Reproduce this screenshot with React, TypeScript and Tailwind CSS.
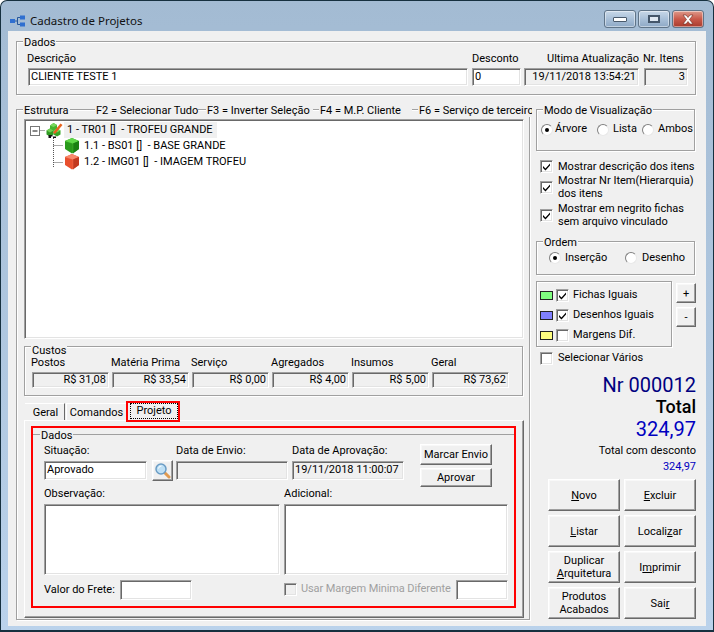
import type { ReactNode } from 'react';

const sunken =
  'border border-t-[#a0a0a0] border-l-[#a0a0a0] border-r-white border-b-white shadow-[inset_1px_1px_0_#696969,inset_-1px_-1px_0_#e3e3e3]';
const raised =
  'border border-t-white border-l-white border-r-[#696969] border-b-[#696969] shadow-[inset_-1px_-1px_0_#a0a0a0,inset_1px_1px_0_#f8f8f8] bg-[#f0f0f0]';
const etched = 'border border-[#a0a0a0] shadow-[inset_1px_1px_0_white,1px_1px_0_white]';

function Group({ title, className, titleTop = 'top-[-6px]', children }: { title?: string; className: string; titleTop?: string; children?: ReactNode }) {
  return (
    <div className={`relative ${etched} ${className}`}>
      {title && <span className={`absolute left-[6px] ${titleTop} bg-[#f0f0f0] px-px leading-[13px]`}>{title}</span>}
      {children}
    </div>
  );
}

function Field({ className, text, right }: { className: string; text?: string; right?: boolean }) {
  return (
    <div className={`${sunken} flex items-center px-[2px] whitespace-nowrap ${right ? 'justify-end' : ''} ${className}`}>
      {text}
    </div>
  );
}

function Check({ checked, disabled }: { checked?: boolean; disabled?: boolean }) {
  return (
    <span className={`${sunken} ${disabled ? 'bg-[#f0f0f0]' : 'bg-white'} inline-flex h-[13px] w-[13px] shrink-0 items-center justify-center`}>
      {checked && (
        <svg width="9" height="9" viewBox="0 0 9 9">
          <path d="M1 4l2.500 2.500L8 1.500v2L3.500 8.500 1 6z" fill="#000" />
        </svg>
      )}
    </span>
  );
}

function Radio({ checked }: { checked?: boolean }) {
  return (
    <span className="inline-flex h-[12px] w-[12px] shrink-0 items-center justify-center rounded-full border border-t-[#808080] border-l-[#808080] border-r-[#e8e8e8] border-b-[#e8e8e8] bg-white">
      {checked && <span className="h-[4px] w-[4px] rounded-full bg-black" />}
    </span>
  );
}

function Cube({ top, side, dark }: { top: string; side: string; dark: string }) {
  return (
    <svg width="16" height="17" viewBox="0 0 16 17" className="-mt-px shrink-0">
      <path d="M1 4l7-3 7 3v8l-7 4.500L1 12z" fill={side} />
      <path d="M1 4l7-3 7 3-6 2.500z" fill={top} />
      <path d="M9 6.500L15 4v8l-6 4.500z" fill={dark} />
      <path d="M1 4l8 2.500v10" stroke={top} strokeWidth="0.5" fill="none" opacity="0.6" />
    </svg>
  );
}

function RootIcon() {
  return (
    <svg width="17" height="17" viewBox="0 0 17 17" className="shrink-0">
      <path d="M4 3.500L7.500 1 11 3v4L7.500 9 4 7z" fill="#45b52f" />
      <path d="M4 3.500L7.500 1 11 3 7.500 5z" fill="#7ad85e" />
      <path d="M0.500 8.500L4 6.500 7.500 8.500v4L4 14.500 0.500 12.500z" fill="#2f9a22" />
      <path d="M0.500 8.500L4 6.500 7.500 8.500 4 10.500z" fill="#6ccf50" />
      <path d="M7.500 8.500L11 6.500 14.500 8.500v4L11 14.500 7.500 12.500z" fill="#36a526" />
      <path d="M7.500 8.500L11 6.500 14.500 8.500 11 10.500z" fill="#7ad85e" />
      <path d="M7 10.500L14.500 1.500 16.500 3 9 12z" fill="#e8641f" />
      <path d="M2.500 13h4v1.500H5V16H2.500zM7 14.500h3V16H7z" fill="#111" />
    </svg>
  );
}

function TreeRow({ indent, icon, text, selected }: { indent: string; icon: ReactNode; text: string; selected?: boolean }) {
  return (
    <div className={`flex h-[16px] items-center ${indent}`}>
      {icon}
      <span className={`ml-[1px] flex h-[16px] items-center whitespace-pre px-[3px] ${selected ? 'bg-[#f0f0f0] pr-[4px]' : ''}`}>{text}</span>
    </div>
  );
}

function Btn({ className, children }: { className: string; children: ReactNode }) {
  return <button className={`${raised} flex flex-col items-center justify-center whitespace-nowrap leading-[13px] ${className}`}>{children}</button>;
}

function Custo({ label, value }: { label: string; value: string }) {
  return (
    <div className="w-[80px]">
      <div className="h-[16px] leading-[13px]">{label}</div>
      <Field className="ml-px h-[16px] w-[77px]" text={value} right />
    </div>
  );
}

function WinButton({ className, children }: { className: string; children: ReactNode }) {
  return (
    <div className={`flex h-[18px] w-[32px] items-center justify-center rounded-[3px] border border-[#5f7488] shadow-[inset_0_0_0_1px_rgba(255,255,255,0.45)] ${className}`}>
      {children}
    </div>
  );
}

export default function App() {
  return (
    <div className="flex h-[632px] w-[714px] flex-col overflow-hidden rounded-t-[7px] border border-b-2 border-[#16303f] bg-gradient-to-b from-[#a3bbd3] to-[#bad2eb] font-['Roboto',sans-serif] text-[11px] text-black">
      {/* title bar */}
      <div className="flex h-[30px] shrink-0 items-center pl-[9px] pr-[9px]">
        <svg width="15" height="12" viewBox="0 0 15 12" className="mt-[9px] shrink-0">
          <path d="M5 6h2.500M7.500 2.500h2.500M7.500 2.500v7h2.500" stroke="#27579a" fill="none" />
          <rect x="0" y="4" width="5" height="4" fill="#2f6fd0" />
          <rect x="10" y="0.500" width="5" height="4" fill="#2f6fd0" />
          <rect x="10" y="7.500" width="5" height="4" fill="#2f6fd0" />
        </svg>
        <span className="ml-[5px] mt-[9px] font-['Noto_Sans',sans-serif] text-[11.5px] text-[#111]">Cadastro de Projetos</span>
        <div className="ml-auto flex gap-[2px] self-start pt-[9px]">
          <WinButton className="bg-gradient-to-b from-[#c8d8e8] via-[#a9c0d8] to-[#8ea9c6]">
            <span className="h-[5px] w-[14px] rounded-[1px] border border-[#4a5a6c] bg-white" />
          </WinButton>
          <WinButton className="bg-gradient-to-b from-[#c8d8e8] via-[#a9c0d8] to-[#8ea9c6]">
            <span className="h-[8px] w-[12px] border-2 border-[#44566a] bg-[#dfe8f2]" />
          </WinButton>
          <WinButton className="bg-gradient-to-b from-[#dd9a8c] via-[#c9594a] to-[#a83a2c]">
            <svg width="16" height="11" viewBox="0 0 16 11">
              <path d="M3 1h3l2 2.500L10 1h3l-3.500 4.500L13 10h-3L8 7.500 6 10H3l3.500-4.500z" fill="#fff" stroke="#6b2a20" strokeWidth="0.6" />
            </svg>
          </WinButton>
        </div>
      </div>

      {/* client area */}
      <div className="mx-[7px] h-[595px] shrink-0 bg-[#f0f0f0] pl-[8px] pt-[10px]">
        <Group title="Dados" className="flex h-[54px] w-[680px] pl-[11px] pt-[10px]">
          <div className="w-[440px]">
            <div className="-ml-px h-[16px] leading-[13px]">Descrição</div>
            <Field className="h-[18px] bg-white" text="CLIENTE TESTE 1" />
          </div>
          <div className="ml-[4px] w-[49px]">
            <div className="h-[16px] leading-[13px]">Desconto</div>
            <Field className="h-[18px] bg-white" text="0" />
          </div>
          <div className="ml-[3px] w-[115px]">
            <div className="h-[16px] whitespace-nowrap text-right leading-[13px]">Ultima Atualização</div>
            <Field className="h-[18px]" text="19/11/2018 13:54:21" right />
          </div>
          <div className="ml-[5px] w-[44px]">
            <div className="-ml-px h-[16px] whitespace-nowrap leading-[13px]">Nr. Itens</div>
            <Field className="h-[18px]" text="3" right />
          </div>
        </Group>

        <div className="mt-[14px] flex items-start">
          {/* left column */}
          <div className={`relative h-[511px] w-[514px] ${etched}`}>
            <div className="absolute left-[6px] right-[-3px] top-[-6px] flex overflow-hidden whitespace-nowrap leading-[13px]">
              <span className="w-[47px] shrink-0 bg-[#f0f0f0] px-px">Estrutura</span>
              <span className="ml-[25px] w-[103px] shrink-0 bg-[#f0f0f0] px-px">F2 = Selecionar Tudo</span>
              <span className="ml-[8px] w-[107px] shrink-0 bg-[#f0f0f0] px-px">F3 = Inverter Seleção</span>
              <span className="ml-[6px] w-[93px] shrink-0 bg-[#f0f0f0] px-px">F4 = M.P. Cliente</span>
              <span className="ml-[6px] shrink-0 bg-[#f0f0f0] px-px">F6 = Serviço de terceiro</span>
            </div>

            <div className={`${sunken} relative ml-[7px] mt-[9px] h-[220px] w-[500px] bg-white pl-[5px] pt-[2px]`}>
              <svg width="50" height="45" viewBox="0 0 50 45" className="absolute left-[4px] top-[3px]">
                <path d="M10.500 7.500h6M24.500 15v30M24.500 22.500h10M24.500 39.500h10" stroke="#555" strokeDasharray="1 1" fill="none" />
                <rect x="1.500" y="3.500" width="9" height="9" fill="#fff" stroke="#777" />
                <path d="M3.500 8h5" stroke="#111" />
              </svg>
              <TreeRow indent="pl-[16px]" icon={<RootIcon />} text="1 - TR01 []  - TROFEU GRANDE" selected />
              <TreeRow indent="pl-[34px]" icon={<Cube top="#5fd848" side="#2a9a1c" dark="#1a8012" />} text="1.1 - BS01 []  - BASE GRANDE" />
              <TreeRow indent="pl-[34px]" icon={<Cube top="#f98a6c" side="#e8502e" dark="#c2381e" />} text="1.2 - IMG01 []  - IMAGEM TROFEU" />
            </div>

            <Group title="Custos" titleTop="top-[-3px]" className="ml-[7px] mt-[7px] flex h-[50px] w-[499px] pl-[6px] pt-[9px]">
              <Custo label="Postos" value="R$ 31,08" />
              <Custo label="Matéria Prima" value="R$ 33,54" />
              <Custo label="Serviço" value="R$ 0,00" />
              <Custo label="Agregados" value="R$ 4,00" />
              <Custo label="Insumos" value="R$ 5,00" />
              <Custo label="Geral" value="R$ 73,62" />
            </Group>

            {/* tabs */}
            <div className="relative ml-[8px] mt-[5px] flex h-[19px] w-[155px] items-end">
              <div className="flex h-[17px] w-[40px] items-center justify-center border-r border-r-[#696969] border-t border-t-white pl-[2px] pt-[2px]">Geral</div>
              <div className="ml-px flex h-[17px] w-[61px] items-center justify-center border-r border-r-[#696969] border-l border-l-white border-t border-t-white pt-[2px]">Comandos</div>
              <div className="mb-px ml-[3px] flex h-[16px] w-[48px] items-center justify-center border border-dotted border-black pt-px">Projeto</div>
              <div className="absolute bottom-[-2px] left-[101px] top-0 w-[54px] border-2 border-[#ff0000]" />
            </div>

            <div className="ml-[7px] h-[198px] w-[500px] border border-t-white border-l-white border-r-[#696969] border-b-[#696969] pl-[6px] pt-[5px] shadow-[inset_-1px_-1px_0_#a0a0a0]">
              <div className="h-[182px] w-[485px] border-2 border-[#ff0000]">
                <div className="relative mt-[6px] border-t border-t-[#a0a0a0]">
                  <span className="absolute left-[7px] top-[-6px] bg-[#f0f0f0] px-px leading-[13px]">Dados</span>
                </div>
                <div className="flex h-[52px] pl-[11px] pt-[9px]">
                  <div className="w-[103px]">
                    <div className="h-[17px] leading-[13px]">Situação:</div>
                    <Field className="h-[19px] bg-white" text="Aprovado" />
                  </div>
                  <Btn className="ml-[5px] mt-[16px] h-[21px] w-[21px]">
                    <svg width="17" height="17" viewBox="0 0 17 17">
                      <path d="M10 10l5 5" stroke="#e09a50" strokeWidth="3" strokeLinecap="round" />
                      <circle cx="7" cy="7" r="5" fill="#bfe0f5" stroke="#6a9cc4" strokeWidth="1.500" />
                      <path d="M4.500 6.500a3 3 0 0 1 3-2.500" stroke="#fff" fill="none" />
                    </svg>
                  </Btn>
                  <div className="ml-[3px] w-[113px]">
                    <div className="h-[17px] leading-[13px]">Data de Envio:</div>
                    <Field className="h-[19px] w-[112px]" />
                  </div>
                  <div className="ml-[3px] w-[113px]">
                    <div className="h-[17px] whitespace-nowrap leading-[13px]">Data de Aprovação:</div>
                    <Field className="h-[19px] w-[112px]" text="19/11/2018 11:00:07" />
                  </div>
                  <div className="ml-[15px] flex flex-col gap-[3px]">
                    <Btn className="h-[26px] w-[72px]">Marcar Envio</Btn>
                    <Btn className="h-[23px] w-[72px]">Aprovar</Btn>
                  </div>
                </div>
                <div className="flex pl-[11px]">
                  <div className="w-[240px]">
                    <div className="h-[17px] leading-[13px]">Observação:</div>
                    <Field className="h-[71px] w-[236px] bg-white" />
                  </div>
                  <div>
                    <div className="h-[17px] leading-[13px]">Adicional:</div>
                    <Field className="h-[71px] w-[224px] bg-white" />
                  </div>
                </div>
                <div className="mt-[5px] flex items-center pl-[11px]">
                  <span className="w-[76px] whitespace-nowrap">Valor do Frete:</span>
                  <Field className="h-[20px] w-[72px] bg-white" />
                  <span className="ml-[92px] flex items-center gap-[4px] pb-[2px] text-[#a0a0a0]">
                    <Check disabled />
                    <span className="whitespace-nowrap tracking-[-0.1px]">Usar Margem Minima Diferente</span>
                  </span>
                  <Field className="ml-auto mr-[6px] h-[20px] w-[52px] bg-white" />
                </div>
              </div>
            </div>
          </div>

          {/* right column */}
          <div className="ml-[6px] w-[160px]">
            <Group title="Modo de Visualização" className="flex h-[42px] w-[159px] items-center pb-[1px] pl-[4px]">
              <Radio checked />
              <span className="ml-[2px] w-[42px]">Árvore</span>
              <Radio />
              <span className="ml-[4px] w-[29px]">Lista</span>
              <Radio />
              <span className="ml-[4px]">Ambos</span>
            </Group>

            <div className="mt-[8px] pl-[4px] leading-[13px]">
              <div className="flex h-[14px] items-center gap-[5px] whitespace-nowrap"><Check checked />Mostrar descrição dos itens</div>
              <div className="mt-px flex h-[26px] items-center gap-[5px] whitespace-nowrap"><Check checked /><span>Mostrar Nr Item(Hierarquia)<br />dos itens</span></div>
              <div className="mt-[2px] flex h-[26px] items-center gap-[5px] whitespace-nowrap"><Check checked /><span>Mostrar em negrito fichas<br />sem arquivo vinculado</span></div>
            </div>

            <Group title="Ordem" className="mt-[13px] flex h-[34px] w-[159px] items-center pl-[12px]">
              <Radio checked />
              <span className="ml-[4px] w-[60px]">Inserção</span>
              <Radio />
              <span className="ml-[5px]">Desenho</span>
            </Group>

            <div className="mt-[6px] flex items-start">
              <div className={`${etched} flex h-[66px] w-[136px] flex-col gap-[7px] pl-[3px] pt-[7px]`}>
                <div className="flex h-[13px] items-center"><span className="mr-[3px] h-[9px] w-[13px] border border-[#222] bg-[#80ff80]" /><Check checked /><span className="ml-[4px]">Fichas Iguais</span></div>
                <div className="flex h-[13px] items-center"><span className="mr-[3px] h-[9px] w-[13px] border border-[#222] bg-[#8080ff]" /><Check checked /><span className="ml-[4px]">Desenhos Iguais</span></div>
                <div className="flex h-[13px] items-center"><span className="mr-[3px] h-[9px] w-[13px] border border-[#222] bg-[#ffff80]" /><Check /><span className="ml-[4px]">Margens Dif.</span></div>
              </div>
              <div className="ml-[4px] mt-[2px] flex flex-col gap-[4px]">
                <Btn className="h-[20px] w-[20px]">+</Btn>
                <Btn className="h-[20px] w-[20px]">-</Btn>
              </div>
            </div>

            <div className="mt-[4px] flex h-[14px] items-center gap-[5px] pl-[4px]"><Check />Selecionar Vários</div>

            <div className="mt-[8px] text-right">
              <div className="h-[24px] text-[20px] leading-[24px] text-[#000080]">Nr 000012</div>
              <div className="h-[20px] text-[18px] font-medium leading-[20px]">Total</div>
              <div className="h-[24px] text-[20px] leading-[24px] text-[#0000c0]">324,97</div>
              <div className="mt-[2px] h-[15px] leading-[15px]">Total com desconto</div>
              <div className="mt-px h-[15px] leading-[15px] text-[#0000c0]">324,97</div>
            </div>

            <div className="ml-[12px] mt-[5px] grid w-[148px] grid-cols-[72px_72px] gap-x-[4px] gap-y-[4px]">
              <Btn className="h-[32px]"><span><u>N</u>ovo</span></Btn>
              <Btn className="h-[32px]"><span><u>E</u>xcluir</span></Btn>
              <Btn className="h-[32px]"><span><u>L</u>istar</span></Btn>
              <Btn className="h-[32px]"><span>Locali<u>z</u>ar</span></Btn>
              <Btn className="h-[32px]"><span>Duplicar</span><span><u>A</u>rquitetura</span></Btn>
              <Btn className="h-[32px]"><span>I<u>m</u>primir</span></Btn>
              <Btn className="h-[32px]"><span>Produtos</span><span>Acabados</span></Btn>
              <Btn className="h-[32px]"><span>Sai<u>r</u></span></Btn>
            </div>
          </div>
        </div>
      </div>
    </div>
  );
}
